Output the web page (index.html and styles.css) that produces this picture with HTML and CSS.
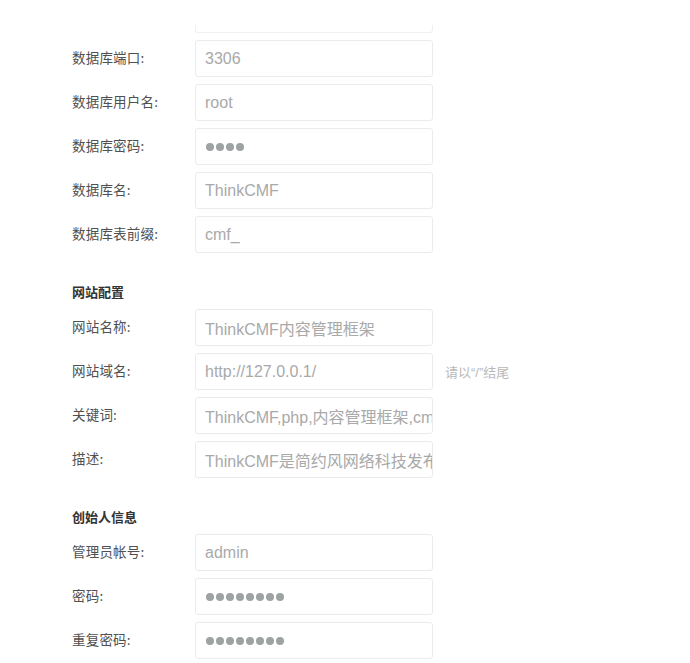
FILE: index.html
```html
<!DOCTYPE html>
<html lang="zh-CN">
<head>
<meta charset="utf-8">
<title>安装配置</title>
<link rel="stylesheet" href="styles.css">
</head>
<body>
<div class="form">
  <div class="group first">
    <div class="row cut"><span class="label"></span><div class="field"></div></div>
    <div class="row"><span class="label">数据库端口:</span><div class="field">3306</div></div>
    <div class="row"><span class="label">数据库用户名:</span><div class="field">root</div></div>
    <div class="row"><span class="label">数据库密码:</span><div class="field dots"><i></i><i></i><i></i><i></i></div></div>
    <div class="row"><span class="label">数据库名:</span><div class="field">ThinkCMF</div></div>
    <div class="row"><span class="label">数据库表前缀:</span><div class="field">cmf_</div></div>
  </div>
  <h3 class="section">网站配置</h3>
  <div class="group">
    <div class="row"><span class="label">网站名称:</span><div class="field">ThinkCMF内容管理框架</div></div>
    <div class="row"><span class="label">网站域名:</span><div class="field">http://127.0.0.1/</div><span class="hint">请以“/”结尾</span></div>
    <div class="row"><span class="label">关键词:</span><div class="field">ThinkCMF,php,内容管理框架,cmf,cms,简约风</div></div>
    <div class="row"><span class="label">描述:</span><div class="field">ThinkCMF是简约风网络科技发布的一款用于快速开发的内容管理框架</div></div>
  </div>
  <h3 class="section">创始人信息</h3>
  <div class="group">
    <div class="row"><span class="label">管理员帐号:</span><div class="field">admin</div></div>
    <div class="row"><span class="label">密码:</span><div class="field dots"><i></i><i></i><i></i><i></i><i></i><i></i><i></i><i></i></div></div>
    <div class="row"><span class="label">重复密码:</span><div class="field dots"><i></i><i></i><i></i><i></i><i></i><i></i><i></i><i></i></div></div>
  </div>
</div>
</body>
</html>
```
FILE: styles.css
```css
html, body {
  margin: 0;
  padding: 0;
  background: #ffffff;
}
body {
  font-family: "Noto Sans CJK SC", "Liberation Sans", sans-serif;
  color: #4a4a4a;
  overflow: hidden;
  height: 663px;
}
.form {
  padding-left: 72px;
}
.group {
  display: flex;
  flex-direction: column;
  gap: 7px;
}
.group.first {
  margin-top: 25px;
}
.row {
  display: flex;
  align-items: center;
  height: 37px;
}
.row.cut {
  height: 8px;
}
.row.cut .field {
  height: 8px;
  border-top: none;
  border-radius: 0 0 3px 3px;
  border-color: #f0f0f0;
}
.label {
  width: 123px;
  flex: none;
  font-size: 13.5px;
  line-height: 18px;
  padding-bottom: 3px;
  color: #505050;
  letter-spacing: 0.2px;
}
.field {
  box-sizing: border-box;
  width: 238px;
  height: 37px;
  flex: none;
  border: 1px solid #ebebeb;
  border-radius: 3px;
  padding: 0 9px;
  display: flex;
  align-items: center;
  overflow: hidden;
  white-space: nowrap;
  font-family: "Liberation Sans", "Noto Sans CJK SC", sans-serif;
  font-size: 16px;
  color: #a9a9a9;
}
.dots {
  gap: 2px;
  padding-left: 10px;
}
.dots i {
  display: block;
  width: 8px;
  height: 8px;
  border-radius: 50%;
  background: #9da3a2;
  flex: none;
}
.hint {
  margin-left: 12px;
  font-family: "Liberation Sans", "Noto Sans CJK SC", sans-serif;
  font-size: 13px;
  color: #b8b8b8;
}
.section {
  margin: 29px 0 7px;
  height: 20px;
  line-height: 20px;
  font-size: 13px;
  font-weight: bold;
  color: #333;
}
```
